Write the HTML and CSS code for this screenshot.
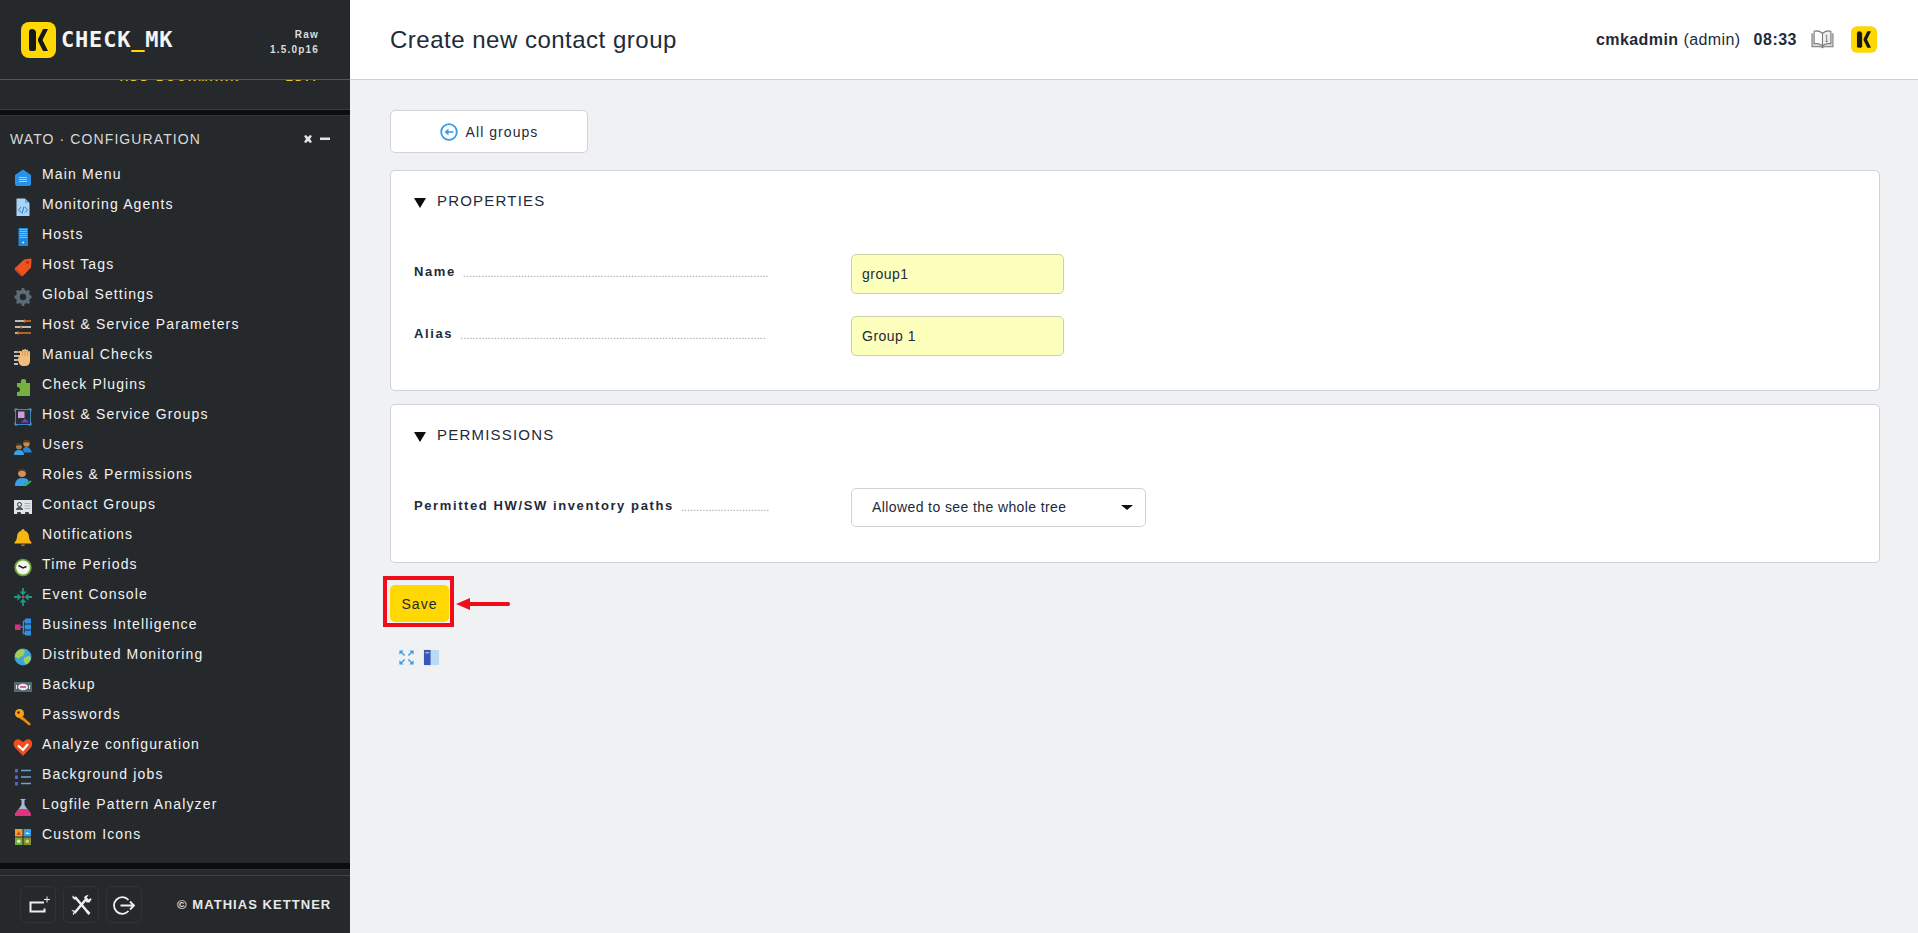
FILE: index.html
```html
<!DOCTYPE html>
<html lang="en">
<head>
<meta charset="utf-8">
<title>Create new contact group</title>
<link rel="stylesheet" href="styles.css">
</head>
<body>
<aside class="sidebar">
  <div class="brand">
    <svg class="brand-logo" viewBox="0 0 35 36"><rect width="35" height="36" rx="8" fill="#ffd703"/><path d="M8 10q0-3 3-3t4 3v17q0 2-2 2h-3q-2 0-2-2z" fill="#16181a"/><path d="M27 7h-5l-5 10v2l5 10h5l-5.500-11z" fill="#16181a"/></svg>
    <div class="wordmark">CHECK<span class="wordmark-us">_</span>MK</div>
    <div class="version"><div>Raw</div><div>1.5.0p16</div></div>
  </div>
  <div class="clipped"><div class="clipped-row"><span class="clip-a">ADD BOOKMARK</span><span class="clip-b">EDIT</span></div></div>
  <div class="band"></div>
  <div class="snapin-head">
    <span class="snapin-title">WATO · CONFIGURATION</span>
    <svg class="snapin-ctl" viewBox="0 0 30 12"><path d="M2 3l2-1 2 2 2-2 2 1-2 3 2 3-2 1-2-2-2 2-2-1 2-3z" fill="#e4e4e4"/><rect x="18" y="4.500" width="10" height="2.500" fill="#e4e4e4"/></svg>
  </div>
  <ul class="menu">
    <li class="item"><svg class="ic" viewBox="0 0 20 20"><path d="M2 8l8-5.500L18 8v9q0 2-2 2H4q-2 0-2-2z" fill="#2b90e8"/><path d="M6 10.500h8M6 12.500h8M6 14.500h8" stroke="#9fd0f7"/></svg><span>Main Menu</span></li>
    <li class="item"><svg class="ic" viewBox="0 0 20 20"><path d="M3.500 1.500h8.500l4.500 4.500v13h-13z" fill="#a9d4f7"/><path d="M12 1.500l4.500 4.500H12z" fill="#62aee8"/><path d="M8 10l-2.500 2.800L8 15.500M12 10l2.500 2.800L12 15.500M11 9.500l-2 7" stroke="#2b79c4" fill="none"/></svg><span>Monitoring Agents</span></li>
    <li class="item"><svg class="ic" viewBox="0 0 20 20"><rect x="5.500" y="1" width="9.500" height="18" fill="#1f88e0"/><path d="M6.500 2.500h7.500M6.500 4.500h7.500M6.500 6.500h7.500M6.500 8.500h7.500M6.500 10.500h7.500" stroke="#9fb3c2"/><circle cx="10.200" cy="15.500" r="1" fill="#d6ebfb"/></svg><span>Hosts</span></li>
    <li class="item"><svg class="ic" viewBox="0 0 20 20"><path d="M11 2.500l6.500-1q1 0 1 1l-.500 8-8 8.500q-1 .500-2 0l-6-6q-.500-1 0-2z" fill="#f0511f"/><path d="M3 12l6 6 1 1-2 0-6-6z" fill="#c43c14"/><circle cx="14.500" cy="5.500" r="1.300" fill="#8c3315"/></svg><span>Host Tags</span></li>
    <li class="item"><svg class="ic" viewBox="0 0 20 20"><circle cx="10" cy="10" r="5.200" fill="none" stroke="#5b6c78" stroke-width="4"/><path d="M10 1v3M10 16v3M1.500 10h3M15.500 10h3M3.800 3.800l2.200 2.200M14 14l2.200 2.200M3.800 16.200L6 14M14 6l2.200-2.200" stroke="#5b6c78" stroke-width="2.800"/></svg><span>Global Settings</span></li>
    <li class="item"><svg class="ic" viewBox="0 0 20 20"><path d="M2 4h9M2 10h5M2 16h2" stroke="#ececec" stroke-width="1.500"/><path d="M11 4h7M7 10h2M4 16h14" stroke="#e8702a" stroke-width="1.500"/><path d="M9 10h9" stroke="#ececec" stroke-width="1.500"/><path d="M11.500 2.500v3M8 8.500v3M5 14.500v3" stroke="#e8702a" stroke-width="1.500"/></svg><span>Host &amp; Service Parameters</span></li>
    <li class="item"><svg class="ic" viewBox="0 0 20 20"><path d="M1 5h7M1 9h7M1 13h7M1 17h4" stroke="#eee" stroke-width="1.400"/><path d="M4 5h2M4 13h2" stroke="#e8702a" stroke-width="1.400"/><path d="M7 10V4.500q1-1 2 0V3q1-1 2 0V2.500q1-.800 2 0V3q1-1 2 0v1.500q1-1 2 0V14q0 5-5 5h-2q-3 0-4-3l-1-3q-.500-3 2-3z" fill="#f2bd7d"/><path d="M9.500 4v5M12 3v6M14.500 4v5" stroke="#c98e50" stroke-width=".8"/></svg><span>Manual Checks</span></li>
    <li class="item"><svg class="ic" viewBox="0 0 20 20"><path d="M7 6h1q-1-4 2.500-4T13 6h4v13H4v-4q3 .500 3-2.500T4 10V6z" fill="#76b13f"/></svg><span>Check Plugins</span></li>
    <li class="item"><svg class="ic" viewBox="0 0 20 20"><rect x="2.500" y="2.500" width="15" height="15" fill="#2a2f3a" stroke="#3f86c4"/><path d="M1.500 1.500h3v1h-2v2h-1zM15.500 1.500h3v3h-1v-2h-2zM1.500 15.500h1v2h2v1h-3zM17.500 15.500h1v3h-3v-1h2z" fill="#4a9bdd"/><rect x="5" y="4.500" width="6.500" height="6.500" fill="#cf9bdc"/><path d="M8 15.500l4-4 4 4z" fill="#7a3fb8"/></svg><span>Host &amp; Service Groups</span></li>
    <li class="item"><svg class="ic" viewBox="0 0 20 20"><circle cx="6" cy="9.500" r="3" fill="#b07a48"/><path d="M3 9q0-3 3-3t3 3q-3-1.500-6 0z" fill="#4a3322"/><circle cx="13.500" cy="6.500" r="3.200" fill="#c98a50"/><path d="M10.300 6q0-3 3.200-3t3.200 3q-3-1.500-6.400 0z" fill="#5c3c1e"/><path d="M1 18q0-5 5-5t5 5z" fill="#37a2ee"/><path d="M10 13q0-3 3.500-3t5.500 5.500H11z" fill="#2785d8"/></svg><span>Users</span></li>
    <li class="item"><svg class="ic" viewBox="0 0 20 20"><circle cx="9" cy="6" r="4" fill="#d49255"/><path d="M5 6q-.500-4.500 4-4.500T13 6q-1-2.500-4-2.500T5 6z" fill="#4a3322"/><path d="M2 19q0-8 7-8t6.500 4l-3 4z" fill="#36a0e8"/><path d="M11 16l2 2 5-4" stroke="#3eaa5e" stroke-width="1.800" fill="none"/></svg><span>Roles &amp; Permissions</span></li>
    <li class="item"><svg class="ic" viewBox="0 0 20 20"><rect x="1" y="3" width="18" height="14" fill="#dfe4e9"/><circle cx="6.500" cy="7.500" r="2" fill="none" stroke="#333" stroke-width="1"/><path d="M3 13q0-3 3.500-3t3.500 3z" fill="#555"/><path d="M11.500 6.500h6M11.500 9h6M11.500 11.500h6" stroke="#a6aeb5"/><path d="M3.500 18l1-3h3l1 3zM11.500 18l1-3h3l1 3z" fill="#33373a"/></svg><span>Contact Groups</span></li>
    <li class="item"><svg class="ic" viewBox="0 0 20 20"><path d="M10 2q1.500 0 1.500 1.500Q16 5 16 10q0 3 2.500 5.500v1h-17v-1Q4 13 4 10q0-5 4.500-6.500Q8.500 2 10 2z" fill="#f8b613"/><path d="M8 17.500h4q-.500 1.500-2 1.500t-2-1.500z" fill="#d2820b"/></svg><span>Notifications</span></li>
    <li class="item"><svg class="ic" viewBox="0 0 20 20"><circle cx="10" cy="10.500" r="7.800" fill="#f4f6ea" stroke="#6ea33d" stroke-width="1.800"/><path d="M5.500 8.500l4.500 2.500 3.500-1.500" stroke="#222" stroke-width="1.500" fill="none"/></svg><span>Time Periods</span></li>
    <li class="item"><svg class="ic" viewBox="0 0 20 20"><path d="M10 1v4M10 15v4M1 10h4M15 10h4" stroke="#1b9a86" stroke-width="1.800"/><path d="M6.500 4.500h7L10 8.500zM6.500 15.500h7L10 11.500zM4.500 6.500v7L8.500 10zM15.500 6.500v7L11.500 10z" fill="#1b9a86"/><rect x="8.800" y="8.800" width="2.400" height="2.400" fill="#e33d3d"/></svg><span>Event Console</span></li>
    <li class="item"><svg class="ic" viewBox="0 0 20 20"><rect x="2" y="7.500" width="5.500" height="5.500" fill="#d92f7e"/><path d="M7.500 10h4M10.500 4v12.500h2M10.500 4h2" stroke="#2d8fe6" stroke-width="1.500" fill="none"/><rect x="12" y="1.500" width="6" height="5" fill="#2d8fe6"/><rect x="12" y="7.500" width="6" height="5" fill="#2d8fe6"/><rect x="12" y="13.500" width="6" height="5" fill="#2d8fe6"/></svg><span>Business Intelligence</span></li>
    <li class="item"><svg class="ic" viewBox="0 0 20 20"><circle cx="10" cy="10" r="8.500" fill="#3aa4e2"/><path d="M6 3q5-2 6 1.500L10 9l-3 1-1.500 2L2 9.500q0-4 4-6.500zM11 11l5-2.500 2 2.500q-1 4.500-5 6.500l-2.500-3z" fill="#a7cc52"/></svg><span>Distributed Monitoring</span></li>
    <li class="item"><svg class="ic" viewBox="0 0 20 20"><rect x="1" y="5" width="18" height="10" fill="#566a75"/><ellipse cx="10" cy="10" rx="5" ry="3.300" fill="#f2e8ec"/><path d="M7 10h6" stroke="#d9396b" stroke-width="1.500"/><path d="M3.500 8v4M16.500 8v4" stroke="#dfe6ea"/></svg><span>Backup</span></li>
    <li class="item"><svg class="ic" viewBox="0 0 20 20"><circle cx="6.500" cy="6.500" r="4.500" fill="#f6a31a"/><circle cx="5.500" cy="5.500" r="1.200" fill="#25292b"/><path d="M9 9l9 8-1.500 1.500-2-1-1-1.500-1 0-1-1.500-5-3z" fill="#e98f12"/></svg><span>Passwords</span></li>
    <li class="item"><svg class="ic" viewBox="0 0 20 20"><path d="M10 19L1.500 10Q-.500 6 2 3.500t6 0l2 1.500 2-1.500q4-2.500 6 0t.500 6.500z" fill="#ef4e1e"/><path d="M5 8.500l5 4.500 5-6" stroke="#fff" stroke-width="2.200" fill="none"/></svg><span>Analyze configuration</span></li>
    <li class="item"><svg class="ic" viewBox="0 0 20 20"><rect x="2" y="2" width="3" height="3.500" fill="#5560c8"/><rect x="2" y="8.500" width="3" height="3.500" fill="#5560c8"/><rect x="2" y="15" width="3" height="3.500" fill="#5560c8"/><path d="M8 3.500h10M8 10h10M8 16.500h10" stroke="#6fa3d4" stroke-width="1.500"/></svg><span>Background jobs</span></li>
    <li class="item"><svg class="ic" viewBox="0 0 20 20"><path d="M7.500 2h5v1h-1v5l6.500 9q.500 1.500-1 1.500H3q-1.500 0-1-1.500l6.500-9V3h-1z" fill="#a7b9d6"/><path d="M5.500 12h9l3.500 5q.300 1.500-1 1.500H3q-1.300 0-1-1.500z" fill="#e0347c"/></svg><span>Logfile Pattern Analyzer</span></li>
    <li class="item"><svg class="ic" viewBox="0 0 20 20"><rect x="2" y="2" width="7.500" height="7.500" fill="#f0a02b"/><rect x="10.500" y="2" width="7.500" height="7.500" fill="#37a0e3"/><rect x="2" y="10.500" width="7.500" height="7.500" fill="#6fae3e"/><rect x="10.500" y="10.500" width="7.500" height="7.500" fill="#7f8f3a"/><circle cx="5.750" cy="14.250" r="1.800" fill="#e7e7b0"/><circle cx="14.250" cy="14.250" r="1.800" fill="#f1c64c"/><path d="M3.500 8l2.200-4L8 8z" fill="#d7452c"/><path d="M12 7l2-2 3 2z" fill="#d6ecfb"/></svg><span>Custom Icons</span></li>
  </ul>
  <div class="foot">
    <div class="band band-foot"></div>
    <div class="foot-bar">
      <button class="foot-btn"><svg viewBox="0 0 24 24" class="foot-ic"><path d="M18 9.500H4.500v9h14v-3" fill="none" stroke="#eee" stroke-width="2"/><path d="M21 3.500v6M18 6.500h6" stroke="#eee"/></svg></button>
      <button class="foot-btn"><svg viewBox="0 0 24 24" class="foot-ic"><path d="M6 4l14 16.500M18 5L5.500 20" stroke="#eee" stroke-width="2.500"/><path d="M3.500 2.500L7 5 6 7 3.500 5zM15 4l3-2 1.500.500-2 2 2 2L22 5l.500 1.500-2 3h-3M18.500 17l3 3-2 2-3-3.500M2.500 17l3 .500 1 1.500-2 3-1-1 1.500-2-2-1z" fill="#eee"/></svg></button>
      <button class="foot-btn"><svg viewBox="0 0 24 24" class="foot-ic"><path d="M16.500 7A8.300 8.300 0 1 0 16.500 18" fill="none" stroke="#eee" stroke-width="1.800"/><path d="M8.500 12.500H22M18 8.500l4 4-4 4" fill="none" stroke="#eee" stroke-width="1.800"/></svg></button>
      <span class="copyright">© MATHIAS KETTNER</span>
    </div>
  </div>
</aside>
<main class="main">
  <header class="topbar">
    <h1 class="title">Create new contact group</h1>
    <div class="status">
      <span class="user"><b>cmkadmin</b> (admin)</span>
      <b class="clock">08:33</b>
      <svg class="book" viewBox="0 0 22 18"><path d="M1 3v13h9l1 1 1-1h9V3" fill="#d8d8d8" stroke="#777"/><path d="M11 15V3Q7 0 3 1v12q4-1 8 2z" fill="#fff" stroke="#777"/><path d="M11 15V3q4-3 8-2v12q-4-1-8 2z" fill="#eee" stroke="#777"/><path d="M15 5v6M14 5h1M14 11h2" stroke="#666" stroke-width=".8"/></svg>
      <svg class="mini-logo" viewBox="0 0 35 36"><rect width="35" height="36" rx="8" fill="#ffd703"/><path d="M8 10q0-3 3-3t4 3v17q0 2-2 2h-3q-2 0-2-2z" fill="#16181a"/><path d="M27 7h-5l-5 10v2l5 10h5l-5.500-11z" fill="#16181a"/></svg>
    </div>
  </header>
  <div class="content">
    <a class="back"><svg class="back-ic" viewBox="0 0 18 18"><circle cx="9" cy="9" r="7.800" fill="#fff" stroke="#3d9be5" stroke-width="1.800"/><path d="M13.500 9H6" stroke="#3d9be5" stroke-width="1.600"/><path d="M8.500 5.500L4.500 9l4 3.500z" fill="#3d9be5"/></svg>All groups</a>
    <section class="card card-props">
      <h2 class="card-head"><span class="tri"></span>PROPERTIES</h2>
      <div class="row"><div class="legend"><label class="lbl">Name</label><span class="dots">....................................................................................................</span></div><input class="inp" value="group1"></div>
      <div class="row row-next"><div class="legend"><label class="lbl">Alias</label><span class="dots">....................................................................................................</span></div><input class="inp" value="Group 1"></div>
    </section>
    <section class="card card-perm">
      <h2 class="card-head"><span class="tri"></span>PERMISSIONS</h2>
      <div class="row"><div class="legend"><label class="lbl">Permitted HW/SW inventory paths</label><span class="dots">.............................</span></div><div class="sel">Allowed to see the whole tree<span class="sel-arrow"></span></div></div>
    </section>
    <div class="save-wrap">
      <div class="annot-box"><button class="save">Save</button></div>
      <svg class="annot-arrow" viewBox="0 0 56 14"><path d="M1 7L15 1v4h39q2 2 0 4H15v4z" fill="#f00c18"/></svg>
    </div>
    <div class="page-icons">
      <svg class="pi" viewBox="0 0 18 18"><path d="M1.500 6V1.500H6zM12 1.500h4.500V6zM16.500 12v4.500H12zM6 16.500H1.500V12z" fill="#3d9be5"/><path d="M3 3l4 4M15 3l-4 4M15 15l-4-4M3 15l4-4" stroke="#3d9be5" stroke-width="1.500"/></svg>
      <svg class="pi" viewBox="0 0 18 18"><rect x="1" y="1" width="16" height="16" fill="#bcd9f6"/><rect x="1" y="1" width="7" height="16" fill="#3a55b4"/><path d="M2.500 4h4" stroke="#dfe7f5"/></svg>
    </div>
  </div>
</main>
</body>
</html>
```
FILE: styles.css
```css
* { box-sizing: border-box; }
html, body { height: 100%; }
body {
  margin: 0;
  display: flex;
  height: 933px;
  overflow: hidden;
  font-family: "Liberation Sans", Arial, sans-serif;
  background: #f0f1f3;
  color: #1e2a3a;
}
.sidebar {
  width: 350px;
  flex: none;
  height: 933px;
  background: #25292b;
  display: flex;
  flex-direction: column;
  color: #f2f2f2;
}
.brand {
  height: 80px;
  flex: none;
  border-bottom: 1px solid #54575a;
  display: flex;
  align-items: flex-start;
  padding: 22px 31px 0 21px;
}
.brand-logo { width: 35px; height: 36px; flex: none; }
.wordmark {
  margin-left: 5px;
  margin-top: 3px;
  font: bold 22px/30px "DejaVu Sans Mono", monospace;
  letter-spacing: .8px;
  color: #f4f4f4;
}
.wordmark-us { color: #ffd703; }
.version {
  margin-left: auto;
  margin-top: 5px;
  font: bold 10px/15px "Liberation Sans", sans-serif;
  letter-spacing: 1.200px;
  color: #dcdcdc;
  white-space: nowrap;
  display: flex;
  flex-direction: column;
  align-items: flex-end;
}
.clipped { height: 29px; flex: none; overflow: hidden; }
.clipped-row {
  display: flex;
  margin-top: -9px;
  padding-left: 120px;
  font: bold 11px/12px "Liberation Sans", sans-serif;
  letter-spacing: 2.300px;
  color: #e3c92f;
}
.clip-b { margin-left: 45px; }
.band {
  height: 7px;
  flex: none;
  background: #0b0e0f;
  border-top: 1px solid #3b3f41;
  border-bottom: 1px solid #33373a;
}
.snapin-head {
  height: 43px;
  flex: none;
  padding: 3px 18px 0 10px;
  display: flex;
  align-items: center;
  justify-content: space-between;
}
.snapin-title { font-size: 14px; letter-spacing: 1.100px; color: #d8d8d8; }
.snapin-ctl { width: 30px; height: 12px; }
.menu { list-style: none; margin: 0; padding: 0; }
.item {
  height: 30px;
  display: flex;
  align-items: center;
  font-size: 14px;
  letter-spacing: 1.150px;
  color: #f2f2f2;
  white-space: nowrap;
}
.ic {
  width: 20px;
  height: 20px;
  margin: 0 9px 2px 13px;
  align-self: flex-end;
  flex: none;
}
.foot { margin-top: auto; }
.band-foot { border-top: 0; }
.foot-bar {
  margin-top: 5px;
  height: 58px;
  border-top: 1px solid #3f4345;
  padding: 10px 0 0 20px;
  display: flex;
  align-items: flex-start;
  gap: 7px;
}
.foot-btn {
  width: 36px;
  height: 37px;
  padding: 0;
  background: #25292b;
  border: 1px solid #303436;
  border-radius: 6px;
  display: flex;
  align-items: center;
  justify-content: center;
}
.foot-ic { width: 24px; height: 24px; }
.copyright {
  margin-left: 28px;
  line-height: 37px;
  font-size: 13px;
  font-weight: bold;
  letter-spacing: 1.050px;
  color: #e8e8e8;
  white-space: nowrap;
}
.main { flex: 1; min-width: 0; display: flex; flex-direction: column; }
.topbar {
  height: 80px;
  flex: none;
  background: #fff;
  border-bottom: 1px solid #cfd0d2;
  display: flex;
  align-items: center;
  justify-content: space-between;
  padding: 0 41px 0 40px;
}
.title { margin: 0; font-size: 24px; font-weight: normal; letter-spacing: .5px; color: #1e2a3a; }
.status { display: flex; align-items: center; font-size: 16px; letter-spacing: .42px; color: #1e2a3a; }
.user { white-space: nowrap; }
.clock { margin-left: 13px; letter-spacing: .5px; }
.book { width: 23px; height: 19px; margin-left: 14px; }
.mini-logo { width: 26px; height: 27px; margin-left: 17px; }
.content { padding: 30px 38px 0 40px; display: flex; flex-direction: column; align-items: flex-start; }
.back {
  width: 198px;
  height: 43px;
  background: #fff;
  border: 1px solid #cfd2d8;
  border-radius: 5px;
  display: flex;
  align-items: center;
  justify-content: center;
  font-size: 14px;
  letter-spacing: 1.050px;
  color: #1e2a3a;
}
.back-ic { width: 18px; height: 18px; margin-right: 8px; }
.card {
  width: 100%;
  background: #fff;
  border: 1px solid #cfd2d8;
  border-radius: 5px;
  padding: 0 23px;
}
.card-props { margin-top: 17px; height: 221px; }
.card-perm { margin-top: 13px; height: 159px; }
.card-head {
  margin: 0 0 25px;
  height: 58px;
  display: flex;
  align-items: center;
  font-size: 15px;
  font-weight: normal;
  letter-spacing: 1.200px;
  color: #1e2a3a;
}
.tri {
  width: 0;
  height: 0;
  border-left: 6px solid transparent;
  border-right: 6px solid transparent;
  border-top: 10px solid #0c0c0c;
  margin: 5px 11px 0 0;
}
.row { display: flex; align-items: flex-start; white-space: nowrap; }
.row-next { margin-top: 22px; }
.legend { width: 437px; flex: none; display: flex; align-items: flex-start; }
.lbl {
  font-size: 13px;
  font-weight: bold;
  letter-spacing: 1.600px;
  line-height: 16px;
  margin-top: 10px;
  color: #1e2a3a;
}
.dots {
  font-size: 11px;
  line-height: 13px;
  margin: 13px 0 0 7px;
  color: #9a9ea4;
}
.inp {
  width: 213px;
  height: 40px;
  padding: 0 10px;
  background: #fdffbc;
  border: 1px solid #cfcfa8;
  border-radius: 5px;
  font: 14px "Liberation Sans", sans-serif;
  letter-spacing: .5px;
  color: #1e2a3a;
}
.sel {
  position: relative;
  width: 295px;
  height: 39px;
  padding-left: 20px;
  line-height: 37px;
  background: #fff;
  border: 1px solid #cfd2d8;
  border-radius: 5px;
  font-size: 14px;
  letter-spacing: .4px;
  color: #1e2a3a;
}
.sel-arrow {
  position: absolute;
  right: 12px;
  top: 16px;
  border-left: 6px solid transparent;
  border-right: 6px solid transparent;
  border-top: 5px solid #111;
}
.save-wrap { margin: 13px 0 0 -7px; display: flex; align-items: center; }
.annot-box {
  width: 71px;
  height: 51px;
  padding: 5px 1px 1px 3px;
  border: 4px solid #f00c18;
}
.save {
  width: 59px;
  height: 37px;
  background: #ffd703;
  border: 0;
  border-radius: 5px;
  padding: 0;
  font: 14px "Liberation Sans", sans-serif;
  letter-spacing: 1px;
  color: #1e2a3a;
  display: block;
}
.annot-arrow { width: 56px; height: 14px; margin: 4px 0 0 1px; }
.page-icons { margin-top: 22px; margin-left: 8px; display: flex; gap: 8px; }
.pi { width: 17px; height: 17px; }
```
